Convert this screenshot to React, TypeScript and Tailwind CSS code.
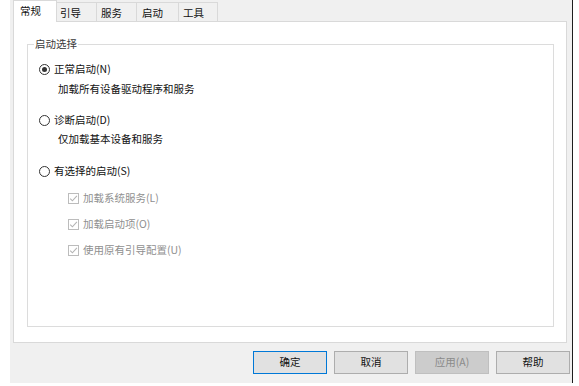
import React from 'react';

const font = { fontFamily: '"Noto Sans CJK SC", "Noto Sans", sans-serif' };

function Radio({ checked, label }: { checked?: boolean; label: string }) {
  return (
    <div className="flex h-[20px] items-center pl-[11px]">
      <span className="flex h-[11px] w-[11px] items-center justify-center rounded-full border border-[#333] bg-white">
        {checked && <span className="h-[5px] w-[5px] rounded-full bg-[#333]" />}
      </span>
      <span className="ml-[4px] text-[#111]">{label}</span>
    </div>
  );
}

function Check({ label }: { label: string }) {
  return (
    <div className="flex h-[20px] items-center pl-[40px]">
      <span className="flex h-[11px] w-[11px] items-center justify-center border border-[#bcbcbc] bg-white">
        <svg width="9" height="9" viewBox="0 0 9 9">
          <path d="M1.2 4.6 L3.4 6.8 L7.9 1.8" fill="none" stroke="#b4b4b4" strokeWidth="1.1" />
        </svg>
      </span>
      <span className="ml-[4px] text-[#8f8f8f]">{label}</span>
    </div>
  );
}

function Btn({ label, primary, disabled }: { label: string; primary?: boolean; disabled?: boolean }) {
  const cls = disabled
    ? 'bg-[#cccccc] border-[#bfbfbf] text-[#8a8a8a]'
    : primary
      ? 'bg-[#e1e1e1] border-[#0078d7] text-[#111]'
      : 'bg-[#e1e1e1] border-[#adadad] text-[#111]';
  return (
    <div className={`flex h-[23px] w-[74px] items-center justify-center border ${cls}`}>{label}</div>
  );
}

export default function App() {
  const tabs = [
    { label: '引导', w: 'w-[40px]', pl: 'pl-[3px]' },
    { label: '服务', w: 'w-[40px]', pl: 'pl-[4px]' },
    { label: '启动', w: 'w-[42px]', pl: 'pl-[5px]' },
    { label: '工具', w: 'w-[39px]', pl: 'pl-[4px]' },
  ];

  return (
    <div className="h-[386px] w-[579px] bg-white text-[10.5px] leading-none" style={font}>
      <div className="ml-[10px] flex h-[383px] w-[563px] flex-col border-r border-[#1e1e1e] bg-[#f0f0f0]">
        {/* tab strip */}
        <div className="ml-[3px] flex h-[21px] items-end">
          <div className="relative z-10 -mb-[1px] flex h-[22px] w-[44px] items-start border border-b-0 border-[#d9d9d9] bg-white pl-[6px] pt-[5px] text-[#111]">
            常规
          </div>
          {tabs.map((t) => (
            <div
              key={t.label}
              className={`flex h-[19px] ${t.w} ${t.pl} items-start border-t border-r border-[#d9d9d9] pt-[5px] text-[#111]`}
            >
              {t.label}
            </div>
          ))}
        </div>

        {/* tab panel */}
        <div className="ml-[3px] h-[322px] w-[554px] border border-[#d9d9d9] bg-white pl-[13px] pt-[22px]">
          <div className="relative h-[283px] w-[527px] border border-[#dcdcdc]">
            <span className="absolute -top-[6px] left-[6px] bg-white px-[1px] text-[#3a3a3a]">启动选择</span>
            <div className="pt-[14px]">
              <Radio checked label="正常启动(N)" />
              <div className="flex h-[20px] items-center pl-[30px] text-[#111]">加载所有设备驱动程序和服务</div>
              <div className="mt-[11px]">
                <Radio label="诊断启动(D)" />
              </div>
              <div className="flex h-[19px] items-center pl-[30px] text-[#111]">仅加载基本设备和服务</div>
              <div className="mt-[12px]">
                <Radio label="有选择的启动(S)" />
              </div>
              <div className="mt-[7px]">
                <Check label="加载系统服务(L)" />
              </div>
              <div className="mt-[6px]">
                <Check label="加载启动项(O)" />
              </div>
              <div className="mt-[6px]">
                <Check label="使用原有引导配置(U)" />
              </div>
            </div>
          </div>
        </div>

        {/* buttons */}
        <div className="mt-[8px] flex justify-end gap-[7px] pr-[2px]">
          <Btn label="确定" primary />
          <Btn label="取消" />
          <Btn label="应用(A)" disabled />
          <Btn label="帮助" />
        </div>
      </div>
    </div>
  );
}
